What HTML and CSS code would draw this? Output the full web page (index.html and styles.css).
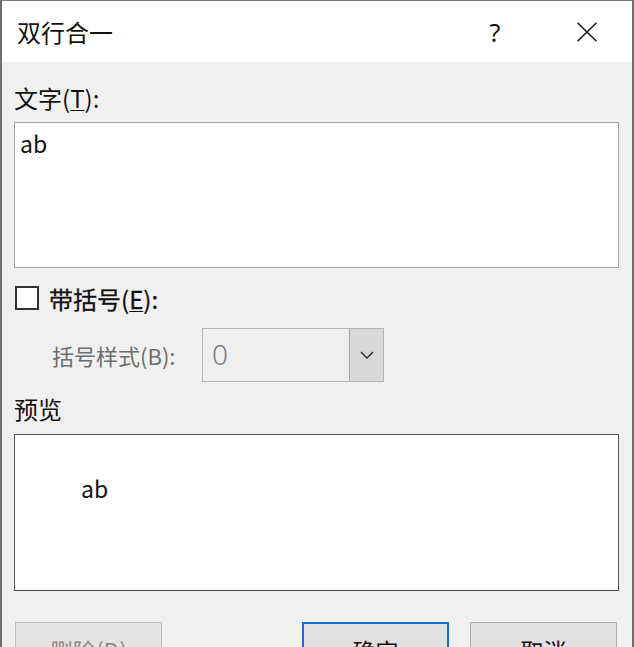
FILE: index.html
```html
<!DOCTYPE html>
<html lang="zh-CN">
<head>
<meta charset="utf-8">
<link rel="stylesheet" href="styles.css">
</head>
<body>
<div class="window">
  <div class="titlebar">
    <div class="title">双行合一</div>
    <div class="help">?</div>
    <div class="close">
      <svg width="22" height="20" viewBox="0 0 22 20"><path d="M1.5 0.8 L20.5 19.2 M20.5 0.8 L1.5 19.2" stroke="#1b1b1b" stroke-width="1.6" fill="none"/></svg>
    </div>
  </div>
  <div class="content">
    <div class="label first">文字(<u>T</u>):</div>
    <div class="textbox">ab</div>
    <div class="check-row">
      <span class="checkbox"></span>
      <span class="check-label">带括号(<u>E</u>):</span>
    </div>
    <div class="style-row">
      <span class="style-label">括号样式(B):</span>
      <div class="combo">
        <span class="combo-value">0</span>
        <span class="combo-btn">
          <svg width="14" height="8" viewBox="0 0 14 8"><path d="M1 1 L7 7 L13 1" stroke="#333" stroke-width="1.5" fill="none"/></svg>
        </span>
      </div>
    </div>
    <div class="label">预览</div>
    <div class="preview"><span>ab</span></div>
    <div class="buttons">
      <button class="btn disabled">删除(D)</button>
      <button class="btn primary">确定</button>
      <button class="btn">取消</button>
    </div>
  </div>
</div>
</body>
</html>
```

FILE: styles.css
```css
html, body {
  margin: 0;
  padding: 0;
  background: #f0f0f0;
}
.window {
  width: 634px;
  height: 647px;
  box-sizing: border-box;
  border-left: 2px solid #6e6e6e;
  border-right: 2px solid #6e6e6e;
  border-top: 1px solid #7a7a7a;
  background: #f0f0f0;
  overflow: hidden;
  font-family: "Noto Sans CJK SC", "Noto Sans", sans-serif;
  color: #111;
}
.titlebar {
  height: 61px;
  background: #fff;
  display: flex;
  align-items: center;
  padding-left: 15px;
}
.title {
  font-size: 24px;
  flex: 1;
  color: #111;
}
.help {
  font-size: 25px;
  width: 30px;
  text-align: center;
  margin-right: 66px;
  font-family: "Noto Sans", sans-serif;
}
.close {
  width: 22px;
  height: 20px;
  margin-right: 34px;
  margin-top: 1px;
}
.close svg { display: block; }
.content {
  padding: 0 13px 0 12px;
}
.label {
  font-size: 24px;
  line-height: 28px;
  margin-top: 13px;
  margin-bottom: 11px;
}
.label.first {
  margin-top: 22px;
  margin-bottom: 10px;
}
.label u { text-decoration-thickness: 1px; text-underline-offset: 2px; }
.textbox {
  height: 146px;
  box-sizing: border-box;
  background: #fff;
  border: 1px solid #a3a3a3;
  padding: 6px 5px;
  font-size: 23px;
  line-height: 28px;
}
.check-row {
  margin-top: 14px;
  height: 32px;
  display: flex;
  align-items: center;
}
.checkbox {
  flex-shrink: 0;
  width: 24px;
  height: 24px;
  box-sizing: border-box;
  border: 2px solid #333;
  background: #fff;
  margin-left: 1px;
  margin-right: 10px;
}
.check-label {
  font-size: 24px;
  color: #111;
  -webkit-text-stroke: 0.3px #111;
}
.check-label u { text-decoration-thickness: 1px; text-underline-offset: 2px; }
.style-row {
  margin-top: 14px;
  display: flex;
  align-items: center;
}
.style-label {
  flex-shrink: 0;
  width: 188px;
  box-sizing: border-box;
  padding-left: 38px;
  font-size: 22px;
  color: #6d6d6d;
  white-space: nowrap;
}
.combo {
  flex-shrink: 0;
  width: 182px;
  height: 54px;
  box-sizing: border-box;
  border: 1px solid #b5b5b5;
  background: #eeeeee;
  display: flex;
  align-items: stretch;
}
.combo-value {
  flex: 1;
  padding-left: 9px;
  font-family: "Noto Sans", sans-serif;
  font-weight: 300;
  font-size: 28px;
  line-height: 50px;
  color: #7d7d7d;
}
.combo-btn {
  width: 33px;
  background: #d9d9d9;
  border-left: 1px solid #a8a8a8;
  display: flex;
  align-items: center;
  justify-content: center;
}
.preview {
  height: 157px;
  box-sizing: border-box;
  background: #fff;
  border: 1px solid #555;
  padding: 39px 0 0 66px;
  font-size: 23px;
  line-height: 28px;
}
.buttons {
  margin-top: 31px;
  display: flex;
}
.btn {
  height: 56px;
  width: 147px;
  box-sizing: border-box;
  border: 1px solid #adadad;
  background: #e1e1e1;
  font-family: "Noto Sans CJK SC", "Noto Sans", sans-serif;
  font-size: 23px;
  color: #111;
  padding: 0;
  margin: 0;
}
.btn.disabled {
  width: 147px;
  margin-left: 1px;
  color: #8a8a8a;
  border-color: #bfbfbf;
  background: #e3e3e3;
}
.btn.primary {
  margin-left: auto;
  border: 2px solid #0a6fcf;
}
.btn + .btn:last-child {
  margin-left: 21px;
  margin-right: 2px;
}
```
